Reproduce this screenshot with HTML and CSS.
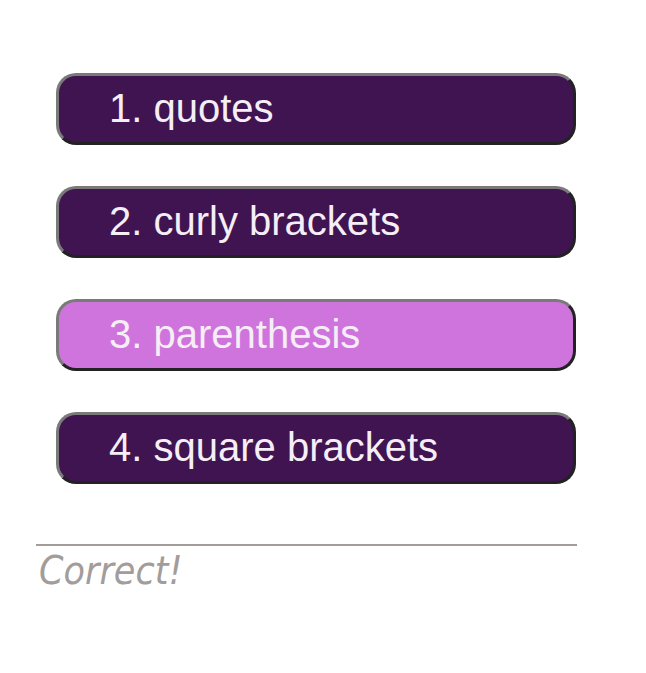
FILE: index.html
```html
<!DOCTYPE html>
<html>
<head>
<meta charset="utf-8">
<link rel="stylesheet" href="styles.css">
</head>
<body>
<div class="quiz">
  <div class="choices">
    <button class="choice">1. quotes</button>
    <button class="choice">2. curly brackets</button>
    <button class="choice selected">3. parenthesis</button>
    <button class="choice">4. square brackets</button>
  </div>
  <div class="result">Correct!</div>
</div>
</body>
</html>
```
FILE: styles.css
```css
html, body {
  margin: 0;
  padding: 0;
  background: #ffffff;
}
.quiz {
  padding: 73px 0 0 36px;
  width: 541px;
}
.choices {
  display: flex;
  flex-direction: column;
  gap: 41px;
  padding-left: 20px;
}
.choice {
  box-sizing: border-box;
  width: 520px;
  height: 72px;
  margin: 0;
  padding: 0 0 2px 50px;
  text-align: left;
  font-family: "Liberation Sans", Arial, sans-serif;
  font-size: 40px;
  color: #f6eef6;
  background: #3f1451;
  border: 3px solid;
  border-color: #7a7a7a #222222 #222222 #7a7a7a;
  border-radius: 20px;
  cursor: pointer;
}
.choice.selected {
  background: #cf74dc;
}
.result {
  margin-top: 60px;
  border-top: 2px solid #a29c9a;
  padding: 2px 0 0 3px;
  font-family: "DejaVu Sans Condensed", "DejaVu Sans", Verdana, sans-serif;
  font-stretch: condensed;
  font-style: italic;
  font-size: 39px;
  color: #a29c9a;
}
```
